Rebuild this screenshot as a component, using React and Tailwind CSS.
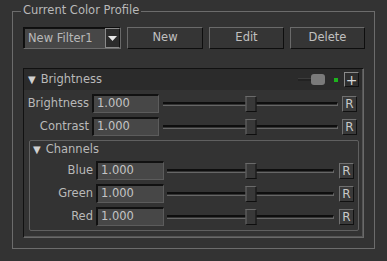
function Slider() {
  return (
    <div className="relative flex-1 flex items-center h-full">
      <div className="w-full h-[4px] border-t-2 border-t-[#0e0e0e] border-b border-b-[#666] border-r border-r-[#666]" />
      <div className="absolute left-1/2 -translate-x-1/2 top-1/2 -translate-y-1/2 w-[11px] h-[16px] bg-[#383838] border border-t-[#6a6a6a] border-l-[#6a6a6a] border-b-[#0e0e0e] border-r-[#0e0e0e]" />
    </div>
  );
}

function Num({ w }) {
  return (
    <div
      className={`${w} h-[19px] bg-[#474747] border border-t-2 border-l-2 border-t-[#111] border-l-[#111] border-b-[#5c5c5c] border-r-[#5c5c5c] pl-[3px] flex items-center text-[#c4c4c4]`}
    >
      1.000
    </div>
  );
}

function RBtn() {
  return (
    <div className="w-[15px] h-[16px] bg-[#3a3a3a] border border-t-[#707070] border-l-[#707070] border-b-[#111] border-r-[#111] flex items-center justify-center text-[12px] text-[#c8c8c8] leading-none">
      R
    </div>
  );
}

function Row({ label, labelW, numW, slider, gap }) {
  return (
    <div className="flex items-center h-[19px]">
      <div className={`${labelW} text-right pr-[3px]`}>{label}</div>
      <Num w={numW} />
      <div className={`flex-1 flex items-center h-full ${slider}`}>
        <Slider />
      </div>
      <div className={gap}>
        <RBtn />
      </div>
    </div>
  );
}

function Btn({ children, w }) {
  return (
    <div
      className={`${w} h-[22px] bg-[#353535] border border-t-[#6a6a6a] border-l-[#6a6a6a] border-b-[#0e0e0e] border-r-[#0e0e0e] flex items-center justify-center text-[#c0c0c0]`}
    >
      {children}
    </div>
  );
}

export default function App() {
  return (
    <div
      className="w-[387px] h-[261px] bg-[#333333] text-[#b9b9b9] text-[11.5px] leading-none pt-[11px] pl-[12px]"
      style={{ fontFamily: '"DejaVu Sans", Verdana, sans-serif' }}
    >
      {/* group box */}
      <div className="relative w-[363px] h-[238px] border border-[#6c6c6c] pt-[15px] pl-[10px]">
        <div className="absolute -top-[7px] left-[8px] px-[2px] bg-[#333333] text-[#b9b9b9]">
          Current Color Profile
        </div>

        {/* top controls */}
        <div className="flex items-center h-[22px]">
          <div className="w-[98px] h-[22px] border border-t-[#0e0e0e] border-l-[#0e0e0e] border-b-[#6a6a6a] border-r-[#6a6a6a] flex">
            <div className="flex-1 bg-[#474747] border-t border-l border-[#111] flex items-center pl-[3px] text-[#b9b9b9]">
              New Filter1
            </div>
            <div className="w-[15px] bg-[#2c2c2c] border border-[#8a8a8a] border-r-[#111] flex items-center justify-center">
              <svg width="9" height="5" viewBox="0 0 9 5">
                <path d="M0 0h9L4.5 5z" fill="#e6e6e6" />
              </svg>
            </div>
          </div>
          <div className="ml-[6px] flex gap-[6px]">
            <Btn w="w-[76px]">New</Btn>
            <Btn w="w-[75px]">Edit</Btn>
            <Btn w="w-[75px]">Delete</Btn>
          </div>
        </div>

        {/* brightness panel */}
        <div className="mt-[19px] w-[341px] h-[170px] border border-t-[#111] border-l-[#111] border-b-[#6a6a6a] border-r-[#6a6a6a]">
          <div className="w-full h-full border-r border-b border-[#555]">
            <div className="h-[21px] bg-[#2b2b2b] flex items-center pl-[4px] pr-[3px]">
              <span className="text-[10px] text-[#d0d0d0] mr-[5px]">▼</span>
              <span className="flex-1">Brightness</span>
              <div className="w-[13px] h-[3px] bg-[#222] border-t border-[#3c3c3c]" />
              <div className="w-[14px] h-[11px] bg-[#7a7a7a] rounded-[3px]" />
              <div className="w-[4px] h-[4px] bg-[#1db31d] ml-[9px]" />
              <div className="ml-[6px] w-[15px] h-[15px] bg-[#2e2e2e] border border-t-[#8a8a8a] border-l-[#8a8a8a] border-b-[#111] border-r-[#111] flex items-center justify-center text-[14px] text-[#d8d8d8]">
                +
              </div>
            </div>

            <div className="pt-[4px] pr-[5px] flex flex-col gap-[4px]">
              <Row label="Brightness" labelW="w-[68px]" numW="w-[67px]" slider="pl-[4px]" gap="pl-[4px]" />
              <Row label="Contrast" labelW="w-[68px]" numW="w-[67px]" slider="pl-[4px]" gap="pl-[4px]" />
            </div>

            {/* channels */}
            <div className="mt-[4px] ml-[5px] w-[330px] h-[91px] border border-[#606060] rounded-[2px]">
              <div className="h-[17px] flex items-center pl-[3px]">
                <span className="text-[10px] text-[#d0d0d0] mr-[5px]">▼</span>
                <span>Channels</span>
              </div>
              <div className="pt-[3px] pr-[4px] flex flex-col gap-[4px]">
                <Row label="Blue" labelW="w-[66px]" numW="w-[68px]" slider="pl-[3px]" gap="pl-[5px]" />
                <Row label="Green" labelW="w-[66px]" numW="w-[68px]" slider="pl-[3px]" gap="pl-[5px]" />
                <Row label="Red" labelW="w-[66px]" numW="w-[68px]" slider="pl-[3px]" gap="pl-[5px]" />
              </div>
            </div>
          </div>
        </div>
      </div>
    </div>
  );
}
